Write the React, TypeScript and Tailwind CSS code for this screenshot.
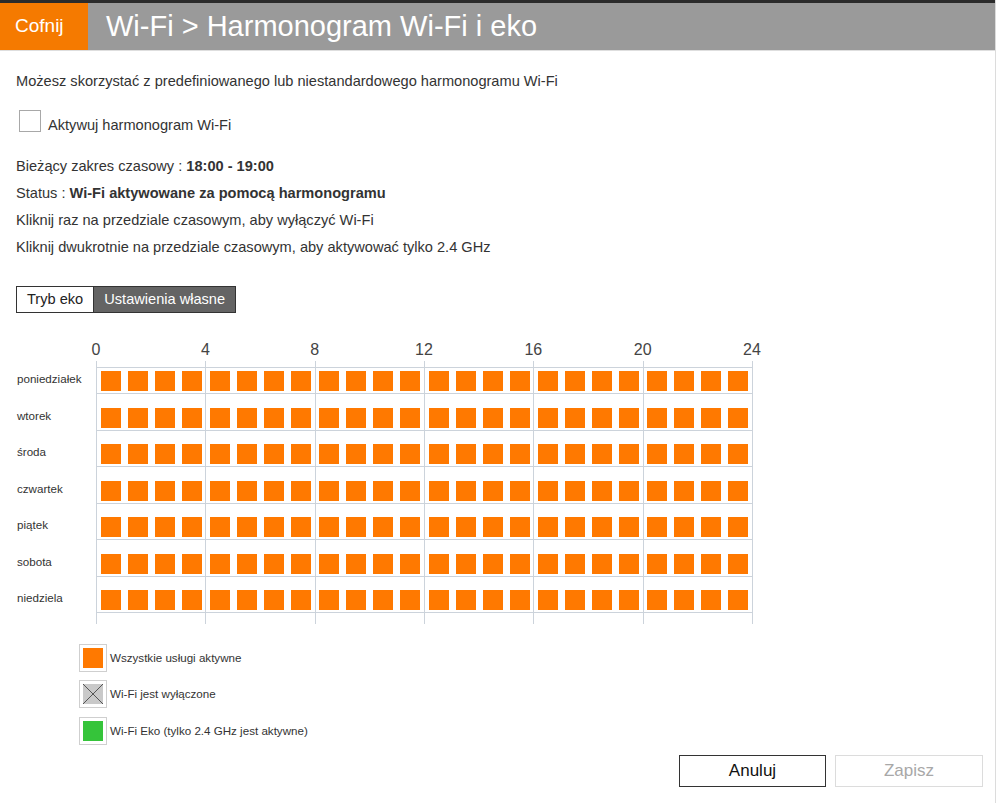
import React from "react";

const days = ["poniedziałek", "wtorek", "środa", "czwartek", "piątek", "sobota", "niedziela"];
const hours = ["0", "4", "8", "12", "16", "20", "24"];

function Column({ last }: { last: boolean }) {
  return (
    <div className={`flex-1 flex flex-col border-l border-[#ccd3db] ${last ? "border-r" : ""}`}>
      <div className="h-[6px]" />
      <div className="border-t border-[#ccd3db]">
        {days.map((d) => (
          <div key={d} className="h-[36.5px]">
            <div className="flex pt-[3px] pb-[2px] border-b border-[#ccd3db]">
              {[0, 1, 2, 3].map((i) => (
                <div key={i} className="flex-1 flex justify-center">
                  <div className="w-[20px] h-[20px] bg-[#ff7900]" />
                </div>
              ))}
            </div>
          </div>
        ))}
      </div>
    </div>
  );
}

export default function App() {
  return (
    <div
      className="w-[996px] min-h-[803px] bg-white border-r border-[#dcdcdc] text-[#333]"
      style={{ fontFamily: '"Liberation Sans", Arial, sans-serif' }}
    >
      <div className="h-[3px] bg-[#2b2b2b]" />
      <div className="flex h-[48px] bg-[#9a9a9a] border-b border-[#dedede]">
        <div className="w-[88px] bg-[#f57a00] flex items-center pl-[15px] text-[19px] text-white">Cofnij</div>
        <div className="flex items-center pl-[18px] text-[29px] text-white leading-none">Wi-Fi &gt; Harmonogram Wi-Fi i eko</div>
      </div>

      <div className="px-4">
        <div className="mt-[20px] text-[14.6px] leading-[20px]">
          Możesz skorzystać z predefiniowanego lub niestandardowego harmonogramu Wi-Fi
        </div>

        <div className="mt-[19px] flex items-start">
          <div className="ml-[3px] w-[22px] h-[22px] border border-[#a8a8a8] bg-white" />
          <div className="ml-[7px] mt-[5px] text-[14.6px] leading-[20px]">Aktywuj harmonogram Wi-Fi</div>
        </div>

        <div className="mt-[18px] text-[14.6px] leading-[27px]">
          <div>
            Bieżący zakres czasowy : <span className="font-bold">18:00 - 19:00</span>
          </div>
          <div>
            Status : <span className="font-bold">Wi-Fi aktywowane za pomocą harmonogramu</span>
          </div>
          <div>Kliknij raz na przedziale czasowym, aby wyłączyć Wi-Fi</div>
          <div>Kliknij dwukrotnie na przedziale czasowym, aby aktywować tylko 2.4 GHz</div>
        </div>

        <div className="mt-[25px] flex h-[27px] w-fit border border-[#333] text-[14.6px]">
          <div className="flex items-center px-[10px] bg-white text-[#222] border-r border-[#333]">Tryb eko</div>
          <div className="flex items-center px-[10px] bg-[#646464] text-white">Ustawienia własne</div>
        </div>

        <div className="mt-[27px] flex">
          <div className="w-[80px]" />
          <div className="w-[656px] flex justify-between h-[20px] text-[16px] leading-[20px] text-[#444]">
            {hours.map((h) => (
              <div key={h} className="w-0 flex justify-center">
                <span className="whitespace-nowrap">{h}</span>
              </div>
            ))}
          </div>
        </div>

        <div className="mt-[1px] flex">
          <div className="w-[80px] pt-[7px] text-[11.6px] text-[#333]">
            {days.map((d) => (
              <div key={d} className="h-[36.5px] leading-[21px] pl-[1px]">
                {d}
              </div>
            ))}
          </div>
          <div className="w-[657px] flex">
            {[0, 1, 2, 3, 4, 5].map((i) => (
              <Column key={i} last={i === 5} />
            ))}
          </div>
        </div>

        <div className="mt-[20px] ml-[63px] flex flex-col gap-[8.5px] text-[11.6px] text-[#333]">
          <div className="flex items-center gap-[3px]">
            <div className="w-[28px] h-[28px] border border-[#cfcfcf] p-[3px] bg-white">
              <div className="w-full h-full bg-[#ff7900]" />
            </div>
            <span>Wszystkie usługi aktywne</span>
          </div>
          <div className="flex items-center gap-[3px]">
            <div className="w-[28px] h-[28px] border border-[#cfcfcf] p-[3px] bg-white">
              <svg width="20" height="20" viewBox="0 0 20 20" className="block">
                <rect x="0" y="0" width="20" height="20" fill="#c9c9c9" />
                <line x1="0" y1="0" x2="20" y2="20" stroke="#555" strokeWidth="1" />
                <line x1="20" y1="0" x2="0" y2="20" stroke="#555" strokeWidth="1" />
              </svg>
            </div>
            <span>Wi-Fi jest wyłączone</span>
          </div>
          <div className="flex items-center gap-[3px]">
            <div className="w-[28px] h-[28px] border border-[#cfcfcf] p-[3px] bg-white">
              <div className="w-full h-full bg-[#35c43a]" />
            </div>
            <span>Wi-Fi Eko (tylko 2.4 GHz jest aktywne)</span>
          </div>
        </div>
      </div>

      <div className="mt-[10px] flex justify-end gap-[9px] pr-[12px]">
        <button className="w-[147px] h-[32px] border border-[#333] bg-white text-[17px] text-[#111]">Anuluj</button>
        <button className="w-[148px] h-[32px] border border-[#dcdcdc] bg-white text-[17px] text-[#a8a8a8]">Zapisz</button>
      </div>
    </div>
  );
}
